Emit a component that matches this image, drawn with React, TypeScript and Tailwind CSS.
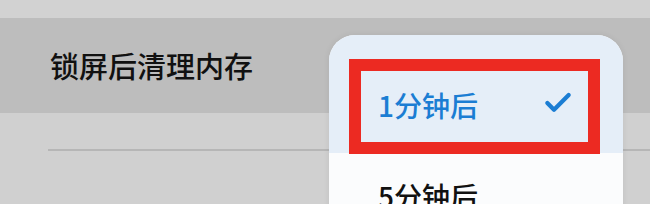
import { Check } from 'lucide-react'

const font = { fontFamily: '"Noto Sans CJK SC", "Noto Sans", sans-serif' }

export default function App() {
  return (
    <div className="relative w-[650px] h-[204px] overflow-hidden bg-[#cfcfcf]" style={font}>
      {/* settings list behind the dim */}
      <div className="h-[18px] bg-[#d2d2d2]" />
      <div className="h-[95px] bg-[#bdbdbd] flex items-center pl-[50px]">
        <span className="text-[29px] leading-none text-[#111] font-medium">锁屏后清理内存</span>
      </div>
      <div className="h-[91px] bg-[#d0d0d0] pt-[36px] pl-[48px]">
        <div className="h-[2px] bg-[#b6b6b6]" />
      </div>

      {/* dropdown menu */}
      <div className="absolute left-[329px] top-[35px] w-[294px] h-[200px] rounded-[26px] bg-[#fbfcfd] overflow-hidden shadow-[0_0_6px_rgba(0,0,0,0.08)]">
        <div className="h-[118px] bg-[#e5eef8] pt-[24px] pl-[20px]">
          <div className="w-[251px] h-[95px] border-[12px] border-[#ec2a22] flex items-center justify-between pl-[17px] pr-[14px]">
            <span className="text-[28px] leading-none font-medium text-[#1b7dd3] -mt-[4px]">1分钟后</span>
            <Check size={32} strokeWidth={3.2} className="text-[#1b7dd3] -mt-[8px]" />
          </div>
        </div>
        <div className="pl-[49px] pt-[29px]">
          <span className="text-[28px] leading-none font-medium text-[#111]">5分钟后</span>
        </div>
      </div>
    </div>
  )
}
